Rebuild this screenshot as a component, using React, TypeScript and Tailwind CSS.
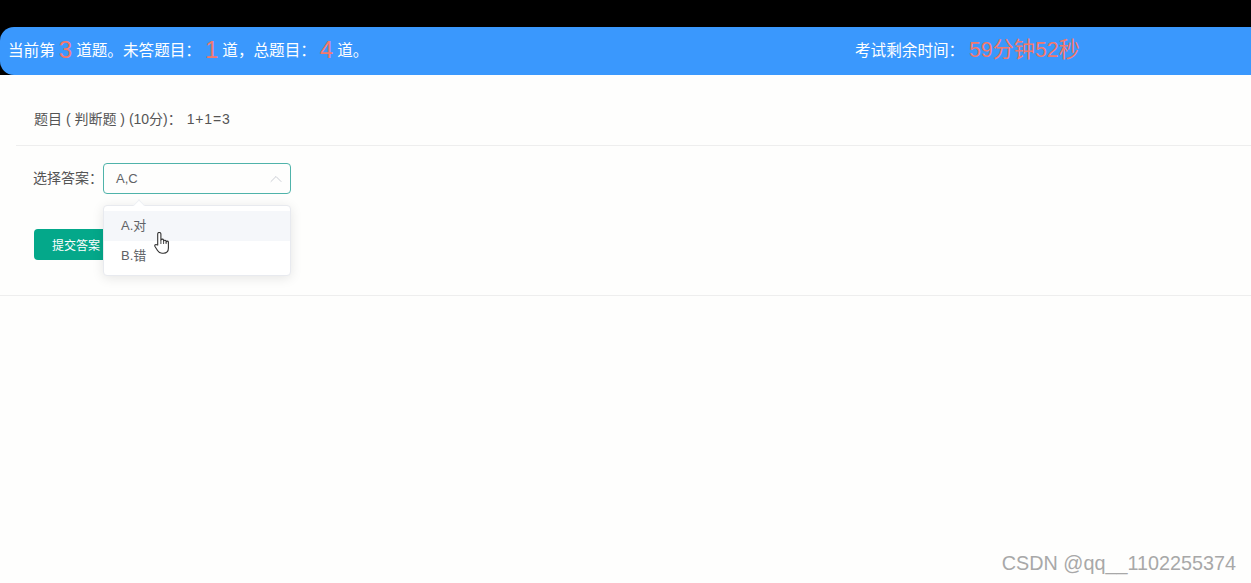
import { ChevronUp } from 'lucide-react';

const font = "font-['Liberation_Sans','Noto_Sans_CJK_SC',sans-serif]";

function Num({ children }: { children: string }) {
  return <span className="mb-[3px] px-[4px] text-[24px] leading-none text-[#f4786c]">{children}</span>;
}

function HandCursor() {
  return (
    <svg className="absolute left-[50px] top-[26px] h-[22px] w-[15px]" viewBox="0 0 15 22" fill="none">
      <path
        d="M3.7 13V2a1.6 1.6 0 0 1 3.2 0V8.2a1.4 1.4 0 0 1 2.7 0V9.2a1.3 1.3 0 0 1 2.5 0V10a1.2 1.2 0 0 1 2.3 0V16c0 3-2 5.2-5 5.2H8c-2.5 0-3.5-1-4.5-2.7L1 14.5c-.8-1.5 1-2.6 2-1.5Z"
        fill="#fff"
        stroke="#333"
        strokeWidth="1.1"
        strokeLinejoin="round"
      />
      <path d="M6.9 8.2V12M9.6 9.2V12M12.1 10V12" stroke="#333" strokeWidth="0.9" />
    </svg>
  );
}

export default function App() {
  return (
    <div className={`${font} relative h-[583px] w-full overflow-hidden bg-[#fefefd]`}>
      <div className="h-[27px] bg-black" />
      <div className="bg-black">
        <div className="flex h-[48px] items-center rounded-l-[14px] bg-[#3a98fd] pl-[8px] text-[15.6px] text-white">
          <div className="flex w-[847px] items-center whitespace-nowrap">
            <span>当前第</span>
            <Num>3</Num>
            <span>道题。未答题目：</span>
            <Num>1</Num>
            <span>道，总题目：</span>
            <Num>4</Num>
            <span>道。</span>
          </div>
          <div className="flex items-center whitespace-nowrap">
            <span className="w-[114px]">考试剩余时间：</span>
            <span className="mb-[3px] text-[21.2px] text-[#f4786c]">59分钟52秒</span>
          </div>
        </div>
      </div>

      <div className="border-b border-[#eeeeee] pb-[35px]">
        <div className="ml-[16px] flex h-[71px] items-center border-b border-[#eeeeee] pl-[18px] pt-[18px] text-[14px] whitespace-nowrap text-[#555]">
          <span>题目 ( 判断题 ) (10分)：</span>
          <span className="ml-[5px] tracking-[0.8px]">1+1=3</span>
        </div>
        <div className="relative ml-[33px] mt-[17px] flex items-center text-[14px] text-[#555]">
          <span className="w-[70px] whitespace-nowrap">选择答案：</span>
          <div className="flex h-[31px] w-[188px] items-center justify-between rounded-[4px] border border-[#4fb3aa] pl-[12px] pr-[4px] text-[13px] text-[#606266]">
            <span>A,C</span>
            <ChevronUp className="h-[20px] w-[20px] text-[#c0c4cc]" strokeWidth={1} />
          </div>
          <div className="absolute left-[70px] top-[42px] z-10 h-[71px] w-[188px] rounded-[4px] border border-[#e8eaef] bg-white py-[5px] text-[13px] text-[#606266] shadow-[0_2px_12px_rgba(0,0,0,0.1)]">
            <div className="absolute -top-[5px] left-[31px] h-[8px] w-[8px] rotate-45 border-l border-t border-[#eef0f4] bg-white" />
            <div className="flex h-[30px] items-center bg-[#f5f7fa] pl-[17px]">A.对</div>
            <div className="flex h-[30px] items-center pl-[17px]">B.错</div>
            <HandCursor />
          </div>
        </div>
        <button className="ml-[34px] mt-[35px] flex h-[31px] w-[90px] items-center rounded-[4px] bg-[#04a88a] pl-[18px] pt-[2px] text-[12px] text-white">
          提交答案
        </button>
      </div>

      <div className="absolute bottom-[8px] right-[15px] text-[19.8px] leading-[24px] text-[#a8a8a8]">CSDN @qq__1102255374</div>
    </div>
  );
}
